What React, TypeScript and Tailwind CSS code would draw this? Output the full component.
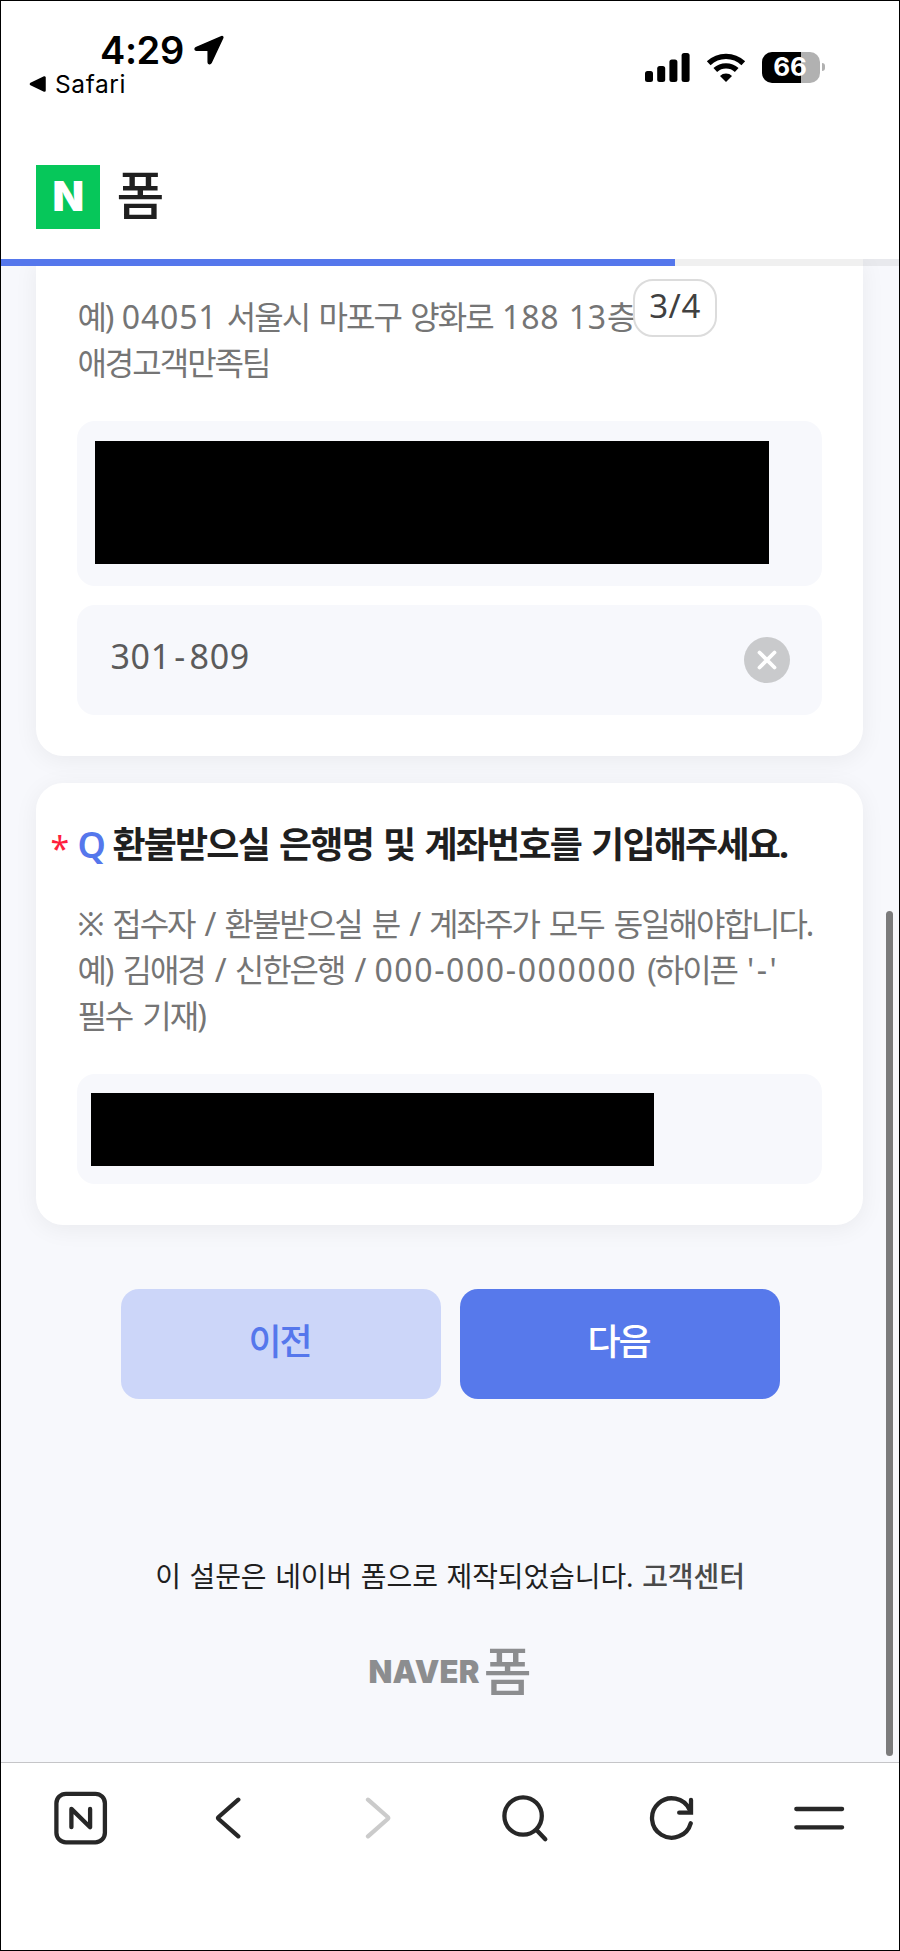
import type { ComponentProps, ReactNode } from "react";
import { clsx } from "clsx";

function StatusBar() {
  return (
    <div className="flex h-[130px] justify-between pt-[29px] pr-[74px] pl-7 font-['Inter',sans-serif] text-black">
      <div>
        <div className="flex h-10 items-center gap-[11px] pl-[71px]">
          <span className="w-[83px] whitespace-nowrap text-[38px] font-semibold leading-10 tracking-[-0.4px]">
            4:29
          </span>
          <svg className="h-[30px] w-[30px]" viewBox="0 0 30 30">
            <path
              d="M27.5 1.700 2 12.600c-1.400.6-1.200 2.700.4 2.700H13.200c.7 0 1 .3 1 1v10.900c0 1.800 2.100 2 2.900.5L28.700 3c.5-1-.3-1.700-1.200-1.300Z"
              fill="currentColor"
              stroke="currentColor"
              strokeLinejoin="round"
              strokeWidth="1.500"
            />
          </svg>
        </div>
        <div className="-mt-px flex h-[30px] items-center gap-[9px]">
          <svg className="h-4 w-[17px]" viewBox="0 0 17 16">
            <path
              d="M2 8 15.500 1.500v13Z"
              fill="currentColor"
              stroke="currentColor"
              strokeLinejoin="round"
              strokeWidth="2.500"
            />
          </svg>
          <span className="text-[24.500px] leading-[30px] tracking-[0.600px]">
            Safari
          </span>
        </div>
      </div>

      <div className="mt-[21px] flex h-8 items-center">
        <svg className="h-[29px] w-[45px]" viewBox="0 0 45 29">
          <rect height="11" rx="2.500" width="8" x="0" y="18" />
          <rect height="16" rx="2.500" width="8" x="12.200" y="13" />
          <rect height="22.500" rx="2.500" width="8" x="24.400" y="6.500" />
          <rect height="29" rx="2.500" width="8" x="36.600" y="0" />
        </svg>
        <svg className="ml-4 h-[29px] w-[40px]" viewBox="0 0 40 29">
          <g fill="none" stroke="currentColor" strokeWidth="5.400">
            <path d="M2.700 10.300a25.200 25.200 0 0 1 34.600 0" />
            <path d="M9.300 17.100a15.700 15.700 0 0 1 21.400 0" />
          </g>
          <path d="m20 29-6-6.100a8.800 8.800 0 0 1 12 0Z" />
        </svg>
        <div className="ml-4 flex h-[31px] w-[58px] items-center justify-center rounded-[10px] bg-[linear-gradient(90deg,#000_67%,#b1b1b1_67%)] pr-0.5 text-[26px] font-bold leading-none tracking-[-0.2px] text-white">
          66
        </div>
        <div className="ml-0.5 h-2 w-[3px] rounded-r-full bg-[#b1b1b1]" />
      </div>
    </div>
  );
}

function Header() {
  return (
    <header className="h-[258px] shrink-0 bg-white">
      <StatusBar />
      <div className="flex items-center pt-[33.500px] pl-[35.400px]">
        <div className="flex h-[64px] w-[64px] items-center justify-center bg-[#06c75a] font-['Inter',sans-serif] text-[41px] font-black leading-none text-white">
          N
        </div>
        <span className="-mt-1 ml-4 text-[52px] font-medium leading-[64px] text-[#1f1f1f]">
          폼
        </span>
      </div>
    </header>
  );
}

function Card({ className, children }: ComponentProps<"section">) {
  return (
    <section
      className={clsx(
        "mr-[36px] ml-[35.400px] bg-white px-[41px] shadow-[0_4px_24px_rgba(0,0,0,0.06)]",
        className,
      )}
    >
      {children}
    </section>
  );
}

function Field({ className, children }: ComponentProps<"div">) {
  return (
    <div
      className={clsx("flex items-center rounded-[18px] bg-[#f7f8fc]", className)}
    >
      {children}
    </div>
  );
}

/* Latin digits run wider than the tightly set hangul around them */
function Wide({ children }: { children: ReactNode }) {
  return <span className="tracking-[0.8px]">{children}</span>;
}

function Toolbar() {
  return (
    <nav className="flex h-[188px] shrink-0 items-start border-t border-[#c5c5c8] bg-white pt-7 text-[#272727]">
      <svg
        className="ml-[53px] h-[54px] w-[54px]"
        fill="none"
        stroke="currentColor"
        strokeLinecap="round"
        strokeLinejoin="round"
        strokeWidth="4.300"
        viewBox="0 0 54 54"
      >
        <rect height="48.500" rx="9.500" width="48.500" x="2.400" y="2.800" />
        <path d="M17.400 36.200V17.900l18.700 18.300V17.900" />
      </svg>
      <svg
        className="mt-1.5 ml-[107px] h-[42px] w-[28px]"
        fill="none"
        stroke="currentColor"
        strokeLinecap="round"
        strokeLinejoin="round"
        strokeWidth="4.300"
        viewBox="0 0 28 42"
      >
        <path d="M23.300 2.700 3.600 20q-1 1 0 2l19.700 17.300" />
      </svg>
      <svg
        className="mt-1.5 ml-[121px] h-[42px] w-[28px] text-[#cbcbcb]"
        fill="none"
        stroke="currentColor"
        strokeLinecap="round"
        strokeLinejoin="round"
        strokeWidth="4.300"
        viewBox="0 0 28 42"
      >
        <path d="M4 2.700 23.700 20q1 1 0 2L4 39.300" />
      </svg>
      <svg
        className="mt-1 ml-[110px] h-[48px] w-[48px]"
        fill="none"
        stroke="currentColor"
        strokeLinecap="round"
        strokeWidth="4.300"
        viewBox="0 0 48 48"
      >
        <circle cx="21.100" cy="21" r="18.700" />
        <path d="m35 35.500 8.300 8.700" />
      </svg>
      <svg
        className="mt-1 ml-[99px] h-[48px] w-[48px]"
        fill="none"
        stroke="currentColor"
        strokeLinecap="round"
        strokeWidth="4.300"
        viewBox="0 0 48 48"
      >
        <path d="M41.700 28.300A19.700 19.700 0 1 1 40.500 14.500" />
        <path d="M42 4.900V17.700H30.200" />
      </svg>
      <svg
        className="mt-1 ml-[97px] h-[48px] w-[52px]"
        fill="none"
        stroke="currentColor"
        strokeLinecap="round"
        strokeWidth="4.300"
        viewBox="0 0 52 48"
      >
        <path d="M2.300 14h45.800M2.300 32.300h45.800" />
      </svg>
    </nav>
  );
}

export default function App() {
  return (
    <div className="relative flex h-[1951px] w-[900px] flex-col overflow-hidden border border-black bg-[#f7f8fc] font-['Noto_Sans','Noto_Sans_CJK_KR',sans-serif]">
      <Header />

      <main className="relative flex-1 overflow-hidden">
        <Card className="h-[497px] rounded-b-[27px] pt-[35px]">
          <p className="whitespace-nowrap text-[32px] leading-[46px] tracking-[-2px] text-[#757575] [word-spacing:3.100px]">
            예) <Wide>04051</Wide> 서울시 마포구 양화로 <Wide>188</Wide>{" "}
            <Wide>13</Wide>층
            <br />
            애경고객만족팀
          </p>
          <Field className="mt-[35.400px] h-[165px] pb-0.5 pl-[18px]">
            <div className="h-[123px] w-[674px] bg-black" />
          </Field>
          <Field className="mt-[18.600px] h-[110px] justify-between pr-8 pl-[33px]">
            <span className="-mt-1.5 text-[34px] tracking-[0.700px] text-[#5b5b5b]">
              301<span className="mx-[3.500px]">-</span>809
            </span>
            <svg className="h-[46px] w-[46px]" viewBox="0 0 46 46">
              <circle cx="23" cy="23" fill="#c9cacc" r="23" />
              <path
                d="m15.500 15.500 15 15M30.500 15.500l-15 15"
                stroke="#fff"
                strokeLinecap="round"
                strokeWidth="3.800"
              />
            </svg>
          </Field>
        </Card>

        <Card className="mt-[27px] h-[442px] rounded-[27px] pt-[37px]">
          <h2 className="relative flex h-[50px] items-center whitespace-nowrap text-[36px] font-bold tracking-[-1.800px] text-[#1f1f1f] [word-spacing:2.500px]">
            <span className="absolute top-[3px] -left-[27px] text-[34px] font-normal leading-[50px] text-[#ff1f3d]">
              *
            </span>
            <span className="mr-2.5 w-[25px] font-semibold text-[#5577ec]">
              Q
            </span>
            환불받으실 은행명 및 계좌번호를 기입해주세요.
          </h2>
          <p className="mt-[31px] whitespace-nowrap text-[32px] leading-[46px] tracking-[-2px] text-[#757575] [word-spacing:3.700px]">
            ※ 접수자 / 환불받으실 분 / 계좌주가 모두 동일해야합니다.
            <br />
            예) 김애경 / 신한은행 /{" "}
            <span className="tracking-[1.600px]">000-000-000000</span> (하이픈{" "}
            <span className="tracking-[2.500px]">'-'</span>
            <br />
            필수 기재)
          </p>
          <Field className="mt-[35px] h-[110px] pl-[13.500px]">
            <div className="h-[73px] w-[563px] bg-black" />
          </Field>
        </Card>

        <div className="mt-16 flex justify-center gap-[19px] text-[36px] font-medium tracking-[-2px]">
          <button
            className="h-[110px] w-80 rounded-[18px] bg-[#ccd6f9] pr-0.5 pb-1 text-[#5577ec]"
            type="button"
          >
            이전
          </button>
          <button
            className="h-[110px] w-80 rounded-[18px] bg-[#5779eb] pr-0.5 pb-1 text-white"
            type="button"
          >
            다음
          </button>
        </div>

        <footer className="mt-[157px] flex flex-col items-center">
          <p className="whitespace-nowrap text-[28px] leading-10 tracking-[-0.100px] text-[#1f1f1f] [word-spacing:1.500px]">
            이 설문은 네이버 폼으로 제작되었습니다.{" "}
            <span className="font-medium text-[#4a4a4a]">고객센터</span>
          </p>
          <div className="mt-[43px] flex items-center gap-1 text-[#8c8d8f]">
            <span className="font-['Inter',sans-serif] text-[31px] font-black leading-none tracking-[0.200px]">
              NAVER
            </span>
            <span className="text-[52px] font-medium leading-[64px]">폼</span>
          </div>
        </footer>

        {/* survey progress, floating above the scrolled cards */}
        <div className="absolute inset-x-0 top-0 h-[7px] bg-black/6">
          <div className="h-full w-[674px] bg-[#5577ec]" />
        </div>
        <div className="absolute top-5 left-[632px] flex h-[58px] w-[84px] items-center justify-center rounded-[20px] border-2 border-[#dcdcdc] bg-white pb-1 text-[33px] tracking-[0.5px] text-[#404040]">
          3/4
        </div>
        <div className="absolute top-[652px] right-[6px] h-[845px] w-[7px] rounded-full bg-[#7b7b7c]" />
      </main>

      <Toolbar />
    </div>
  );
}
